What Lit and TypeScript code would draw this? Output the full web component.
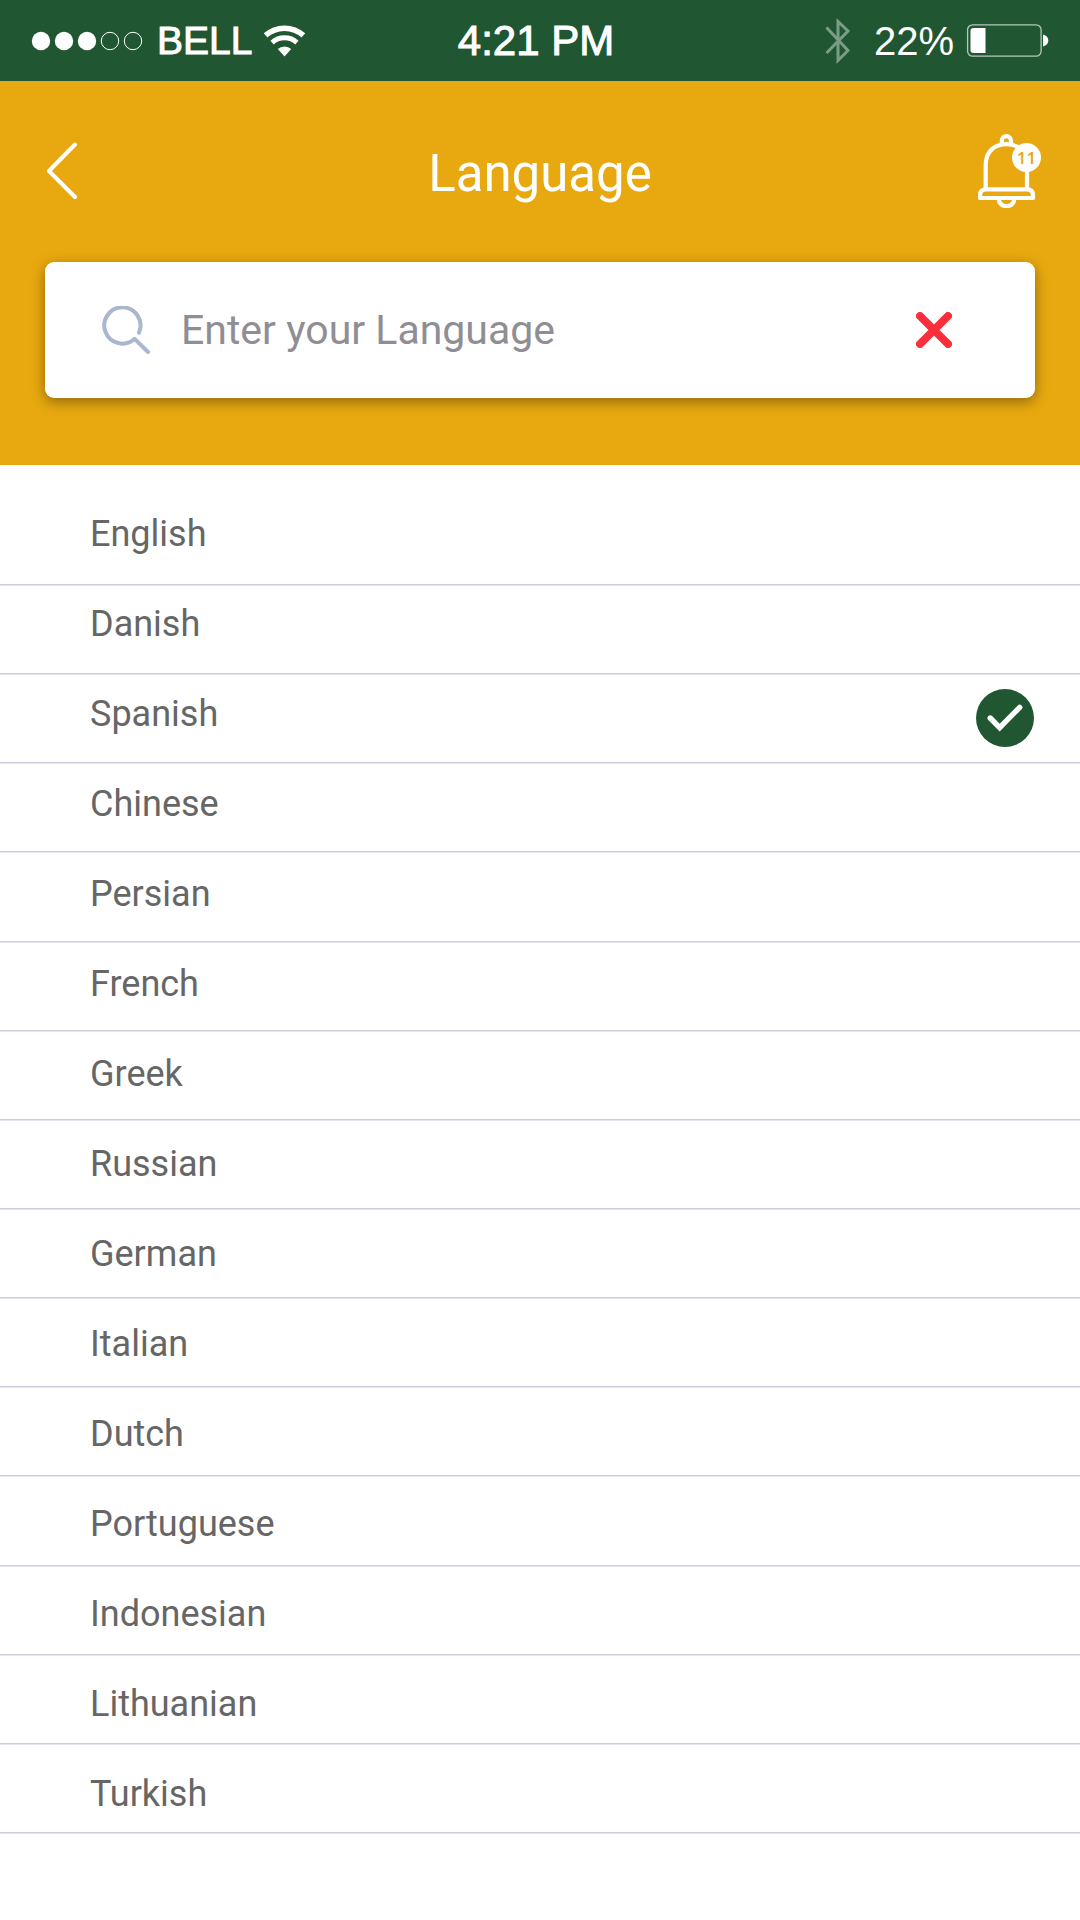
import { LitElement, html, css, svg } from "lit";
import { customElement, state } from "lit/decorators.js";

const LANGUAGES = [
  "English", "Danish", "Spanish", "Chinese", "Persian", "French", "Greek", "Russian",
  "German", "Italian", "Dutch", "Portuguese", "Indonesian", "Lithuanian", "Turkish",
];

@customElement("status-bar")
class StatusBar extends LitElement {
  static styles = css`
    :host {
      display: grid;
      grid-template-columns: 1fr auto 1fr;
      align-items: center;
      box-sizing: border-box;
      min-height: 81px;
      padding: 0 32px 0 24px;
      background: #205632;
      color: #fff;
      font-family: "Liberation Sans", Arial, sans-serif;
      font-size: 40px;
      line-height: 48px;
      white-space: nowrap;
    }
    svg { display: block; flex: none; overflow: visible; }
    .carrier { display: flex; align-items: center; gap: 13px; padding-left: 8px; font-size: 39px; }
    .medium { -webkit-text-stroke: 1px #fff; }
    .time { font-size: 42px; }
    .power { display: flex; align-items: center; justify-content: flex-end; gap: 23px; }
    .battery { display: flex; align-items: center; gap: 13px; }
  `;

  render() {
    return html`
      <div class="carrier">
        <svg width="112" height="20" viewBox="0 0 112 20" role="img" aria-label="Signal 3 of 5">
          ${[9, 32, 55].map((x) => svg`<circle cx=${x} cy="10" r="9.2" fill="#fff" />`)}
          ${[78, 101].map((x) => svg`<circle cx=${x} cy="10" r="8.7" fill="none" stroke="#fff" />`)}
        </svg>
        <span class="medium">BELL</span>
        <svg width="40" height="32" viewBox="0 0 40 32" fill="none" stroke="#fff" role="img" aria-label="Wi-Fi">
          <path d="M.6 10.4A28.2 28.2 0 0 1 38.4 10.4" stroke-width="5.5" />
          <path d="M7.1 17.6A18.5 18.5 0 0 1 31.9 17.6" stroke-width="5" />
          <path d="M12.8 24A10 10 0 0 1 26.2 24L19.5 31.4Z" fill="#fff" stroke="none" />
        </svg>
      </div>
      <span class="time medium">4:21 PM</span>
      <div class="power">
        <svg width="26" height="46" viewBox="0 0 26 46" fill="none" stroke="#7b9d87" stroke-width="3" role="img" aria-label="Bluetooth">
          <path d="M1.5 9.5L23 32.5L13 42.5V3.5L23 13L1.5 35" />
        </svg>
        <div class="battery">
          <span>22%</span>
          <svg width="81" height="33" viewBox="0 0 81 33" role="img" aria-label="Battery">
            <rect x=".6" y=".8" width="73.5" height="31.4" rx="5" fill="none" stroke="#b5c8bb" stroke-width="1.3" />
            <path d="M18.5 4V29H6.5Q3.5 29 3.5 26V7Q3.5 4 6.5 4Z" fill="#fff" />
            <path d="M76 10.5C79.6 11.5 81.3 13.5 81.3 16.5S79.6 21.5 76 22.5Z" fill="#fff" />
          </svg>
        </div>
      </div>
    `;
  }
}

@customElement("app-root")
class AppRoot extends LitElement {
  @state() private selected = "Spanish";
  @state() private query = "";

  static styles = css`
    :host {
      display: block;
      min-height: 100vh;
      background: #fff;
      font-family: Roboto, "Open Sans", sans-serif;
    }
    svg { display: block; flex: none; }
    button { border: 0; padding: 0; background: none; cursor: pointer; }
    .header { padding: 53px 0 67px; background: #e8a80f; }
    .nav {
      display: grid;
      grid-template-columns: 1fr auto 1fr;
      align-items: center;
      margin-bottom: 54px;
      padding: 0 38px;
    }
    .back { justify-self: start; padding-left: 8px; }
    .title { margin: 0; padding-top: 6px; color: #fff; font-size: 51px; line-height: 60px; font-weight: 400; }
    .bell { position: relative; justify-self: end; }
    .count {
      position: absolute;
      top: 9px;
      right: 1px;
      width: 29px;
      border-radius: 50%;
      background: #fff;
      color: #e8a80f;
      font: 600 17px/29px "Open Sans", sans-serif;
      text-align: center;
    }
    .search {
      display: flex;
      align-items: center;
      min-height: 136px;
      margin: 0 45px;
      padding: 0 83px 0 57px;
      box-sizing: border-box;
      border-radius: 9px;
      background: #fff;
      box-shadow: 0 4px 14px rgba(0, 0, 0, 0.38);
    }
    .query {
      flex: 1;
      min-width: 0;
      margin: 0 31px;
      padding: 0;
      border: 0;
      outline: 0;
      background: none;
      color: #666;
      font: 41px/48px Roboto, sans-serif;
    }
    .query::placeholder { color: #8f8e94; opacity: 1; }
    .languages { display: grid; padding-top: 30px; }
    .rules, .options { grid-area: 1 / 1; }
    .rules {
      display: flex;
      flex-direction: column;
      justify-content: space-between;
      margin: 89px 0 11px;
    }
    .rule { height: 1px; border-bottom: 1px solid #e6e4f2; background: #cdcae2; }
    .options {
      display: grid;
      grid-auto-rows: 90px;
      margin: 0;
      padding: 0;
      list-style: none;
    }
    .option {
      display: flex;
      justify-content: space-between;
      padding: 14px 46px 0 90px;
      color: #666;
      font-size: 36px;
      line-height: 50px;
      cursor: pointer;
    }
    .mark { display: grid; }
    .mark > * { grid-area: 1 / 1; }
    .radio {
      appearance: none;
      width: 58px;
      height: 58px;
      margin: 0;
      border-radius: 50%;
      cursor: pointer;
    }
    .radio:checked { background: #205632; }
    .tick { visibility: hidden; pointer-events: none; }
    .radio:checked + .tick { visibility: visible; }
  `;

  render() {
    const shown = LANGUAGES.filter((l) => l.toLowerCase().includes(this.query.toLowerCase()));
    return html`
      <status-bar></status-bar>
      <header class="header">
        <div class="nav">
          <button class="back" aria-label="Back">
            <svg width="32" height="58" viewBox="0 0 32 58" fill="none" stroke="#fff" stroke-width="4" stroke-linecap="round" stroke-linejoin="round">
              <path d="M29 2.5L3 29L29 55" />
            </svg>
          </button>
          <h1 class="title">Language</h1>
          <button class="bell" aria-label="Notifications">
            <svg width="64" height="74" viewBox="0 0 64 74" fill="none" stroke="#fff" stroke-width="4.2">
              <path d="M23.8 11V6.8A4.6 4.6 0 0 1 33 6.8V11" />
              <path d="M7.7 55V31C7.7 17 17 10.2 28.4 10.2S49 17 49 31V55" />
              <path d="M8 55.3H49Q55 55.3 55 61.5V64H2V61.5Q2 55.3 8 55.3Z" stroke-linejoin="round" />
              <path d="M20.7 65A7.8 7.2 0 0 0 36.3 65" />
            </svg>
            <span class="count">11</span>
          </button>
        </div>
        <div class="search">
          <svg width="48" height="48" viewBox="0 0 48 48" fill="none" stroke="#aab7cf" stroke-width="4" stroke-linecap="round" stroke-linejoin="round" aria-hidden="true">
            <path d="M37 26.6A18.1 18.1 0 1 0 32.6 32.8L46 46" />
          </svg>
          <input class="query" type="text" aria-label="Enter your Language" placeholder="Enter your Language"
            .value=${this.query}
            @input=${(e: Event) => (this.query = (e.target as HTMLInputElement).value)} />
          <button aria-label="Clear" @click=${() => (this.query = "")}>
            <svg width="36" height="36" viewBox="0 0 36 36" stroke="#fb2f3c" stroke-width="8" stroke-linecap="round">
              <path d="M4 4L32 32M32 4L4 32" />
            </svg>
          </button>
        </div>
      </header>
      <main class="languages">
        <div class="rules" aria-hidden="true">
          ${shown.map(() => html`<div class="rule"></div>`)}
        </div>
        <ul class="options">
          ${shown.map((name) => html`
            <li>
              <label class="option">
                <span>${name}</span>
                <span class="mark">
                  <input class="radio" type="radio" name="language" .value=${name}
                    .checked=${this.selected === name}
                    @change=${() => (this.selected = name)} />
                  <svg class="tick" width="58" height="58" viewBox="0 0 58 58" fill="none" stroke="#fff" stroke-width="5.4" stroke-linecap="round">
                    <path d="M14.2 29L23.7 38.6L43.7 18.3" />
                  </svg>
                </span>
              </label>
            </li>
          `)}
        </ul>
      </main>
    `;
  }
}
